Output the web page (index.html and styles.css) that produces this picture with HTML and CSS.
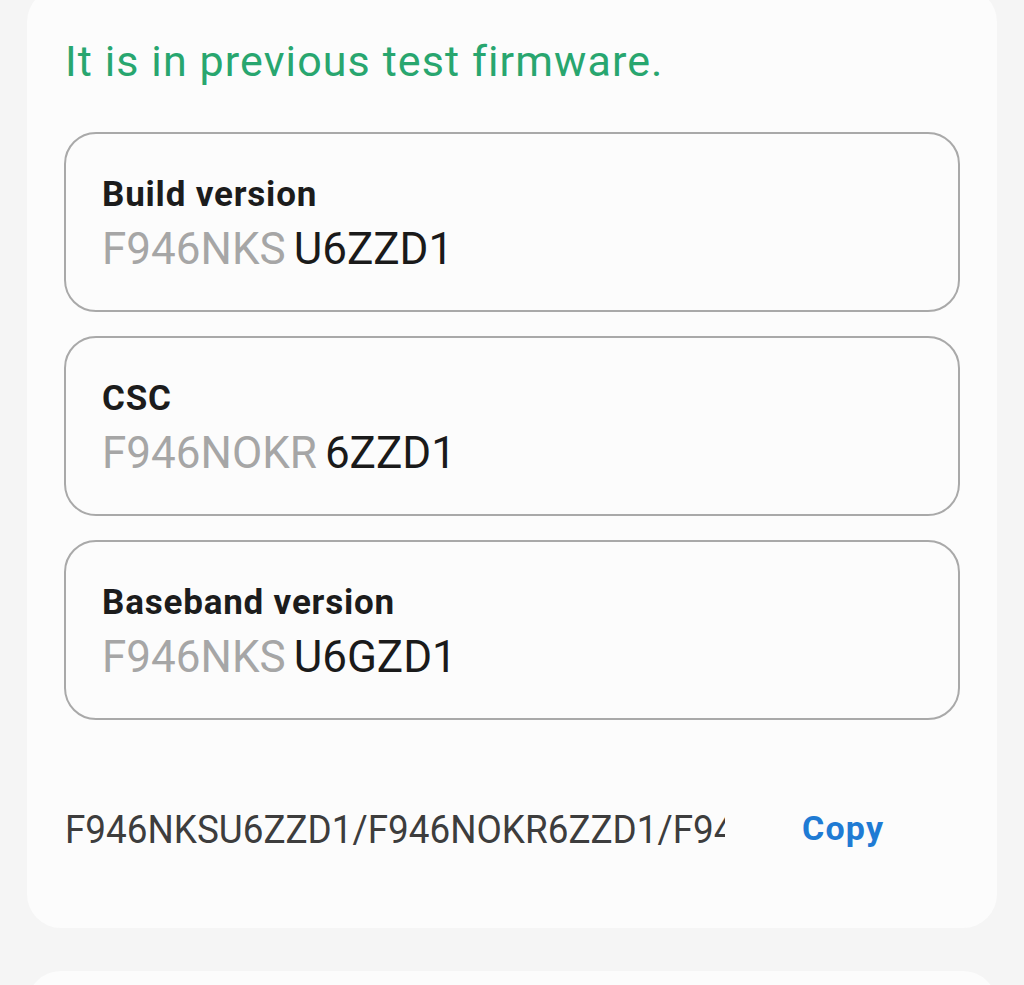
FILE: index.html
```html
<!DOCTYPE html>
<html>
<head>
<meta charset="utf-8">
<link rel="stylesheet" href="styles.css">
</head>
<body>
<div class="card">
  <p class="status">It is in previous test firmware.</p>
  <div class="box">
    <div class="label">Build version</div>
    <div class="value"><span class="old">F946NKS</span><span class="new">U6ZZD1</span></div>
  </div>
  <div class="box">
    <div class="label">CSC</div>
    <div class="value"><span class="old">F946NOKR</span><span class="new">6ZZD1</span></div>
  </div>
  <div class="box">
    <div class="label">Baseband version</div>
    <div class="value"><span class="old">F946NKS</span><span class="new">U6GZD1</span></div>
  </div>
  <div class="copy-row">
    <div class="full"><span class="full-text">F946NKSU6ZZD1/F946NOKR6ZZD1/F946NKSU6GZD1</span></div>
    <div class="copy">Copy</div>
  </div>
</div>
<div class="card next"></div>
</body>
</html>
```
FILE: styles.css
```css
html, body {
  margin: 0;
  padding: 0;
  background: #f5f5f5;
  font-family: Roboto, "Noto Sans", sans-serif;
  overflow: hidden;
}
body {
  width: 1024px;
  height: 985px;
}
.card {
  box-sizing: border-box;
  margin-left: 27px;
  width: 970px;
  margin-top: -12px;
  height: 940px;
  background: #fcfcfc;
  border-radius: 34px;
  padding: 49px 37px 0 37px;
}
.card.next {
  margin-top: 43px;
  height: 100px;
  padding: 0;
}
.status {
  margin: 0 0 47px 1px;
  font-size: 43px;
  line-height: 48px;
  letter-spacing: 1.1px;
  color: #28a66f;
  font-weight: 400;
}
.box {
  box-sizing: border-box;
  height: 180px;
  border: 2px solid #a9a9a9;
  border-radius: 32px;
  padding: 41px 0 0 36px;
  margin-bottom: 24px;
}
.label {
  font-size: 35px;
  line-height: 40px;
  font-weight: 700;
  letter-spacing: 0.8px;
  color: #1c1c1c;
}
.value {
  margin-top: 8px;
  font-size: 44px;
  line-height: 52px;
  color: #1a1a1a;
}
.old {
  color: #a6a6a6;
  margin-right: 8px;
}
.copy-row {
  display: flex;
  align-items: flex-start;
  margin-top: 87px;
  padding-left: 1px;
}
.full {
  width: 660px;
  overflow: hidden;
  white-space: nowrap;
  font-size: 39px;
  line-height: 46px;
  color: #3d3d3d;
}
.full-text {
  display: inline-block;
  transform: scaleX(0.945);
  transform-origin: left center;
}
.copy {
  margin-left: 77px;
  margin-top: -2px;
  font-size: 34px;
  line-height: 46px;
  font-weight: 700;
  letter-spacing: 1.2px;
  color: #1f7bd4;
}
```
